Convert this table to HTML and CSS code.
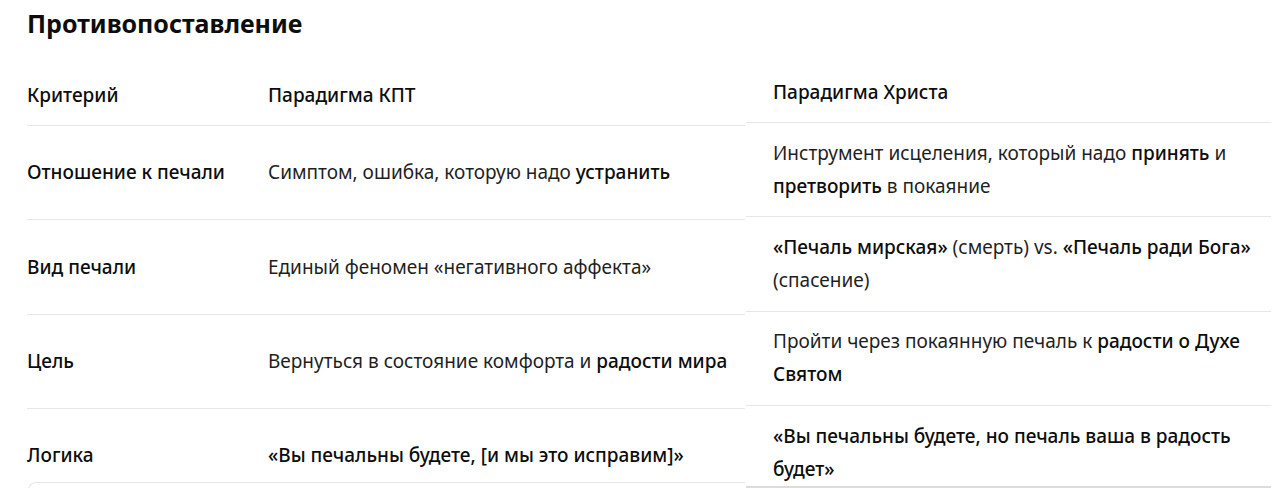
FILE: index.html
```html
<!DOCTYPE html>
<html lang="ru">
<head>
<meta charset="utf-8">
<title>Противопоставление</title>
<link rel="stylesheet" href="styles.css">
</head>
<body>
<main class="page">
  <h2 class="title">Противопоставление</h2>
  <div class="tables">
    <div class="table table-left">
      <div class="row row-head">
        <div class="cell c1">Критерий</div>
        <div class="cell c2">Парадигма КПТ</div>
      </div>
      <div class="row">
        <div class="cell c1 strong">Отношение к печали</div>
        <div class="cell c2">Симптом, ошибка, которую надо <b>устранить</b></div>
      </div>
      <div class="row">
        <div class="cell c1 strong">Вид печали</div>
        <div class="cell c2">Единый феномен «негативного аффекта»</div>
      </div>
      <div class="row">
        <div class="cell c1 strong">Цель</div>
        <div class="cell c2">Вернуться в состояние комфорта и <b>радости мира</b></div>
      </div>
      <div class="row row-last">
        <div class="cell c1 strong">Логика</div>
        <div class="cell c2"><b>«Вы печальны будете, [и мы это исправим]»</b></div>
      </div>
      <div class="below"></div>
    </div>
    <div class="table table-right">
      <div class="row row-head">
        <div class="cell c3">Парадигма Христа</div>
      </div>
      <div class="row">
        <div class="cell c3">Инструмент исцеления, который надо <b>принять</b> и <b>претворить</b> в покаяние</div>
      </div>
      <div class="row">
        <div class="cell c3"><b>«Печаль мирская»</b> (смерть) vs. <b>«Печаль ради Бога»</b> (спасение)</div>
      </div>
      <div class="row">
        <div class="cell c3">Пройти через покаянную печаль к <b>радости о Духе Святом</b></div>
      </div>
      <div class="row row-last">
        <div class="cell c3"><b>«Вы печальны будете, но печаль ваша в радость будет»</b></div>
      </div>
    </div>
  </div>
</main>
</body>
</html>
```

FILE: styles.css
```css
* { box-sizing: border-box; }

html, body {
  margin: 0;
  padding: 0;
  background: #ffffff;
  height: 488px;
  overflow: hidden;
}

body {
  font-family: "Noto Sans", "Open Sans", sans-serif;
  font-size: 19px;
  line-height: 33px;
  color: #1f1f1f;
}

.page {
  padding-left: 27px;
}

.title {
  margin: 7px 0 0;
  font-size: 25px;
  line-height: 32px;
  font-weight: 700;
  color: #0d0d0d;
}

.tables {
  display: flex;
  align-items: flex-start;
  margin-top: 26px;
}

.table-left {
  width: 718px;
  flex: none;
}

.table-right {
  width: 525px;
  flex: none;
  margin-left: 1px;
  margin-top: -3px;
}

.row {
  display: grid;
  align-items: center;
  height: 94.4px;
  border-bottom: 1px solid #e6e6e6;
}

.table-left .row {
  grid-template-columns: 241px 1fr;
}

.table-right .row {
  grid-template-columns: 1fr;
  padding-left: 27px;
}

.row-head {
  height: 61px;
  font-weight: 520;
  color: #0d0d0d;
}

.table-left .row-last {
  height: 73px;
  align-items: start;
  padding-top: 30px;
  border-bottom: none;
}

.table-right .row-last {
  height: 82px;
  align-items: start;
  padding-top: 14px;
  border-bottom: 2px solid #dcdcdc;
}

.below {
  height: 20px;
  margin-left: 1px;
  border-top: 1px solid #e6e6e6;
  border-left: 1px solid #e6e6e6;
  border-top-left-radius: 8px;
}

.strong,
b {
  font-weight: 550;
  color: #0d0d0d;
}
```
